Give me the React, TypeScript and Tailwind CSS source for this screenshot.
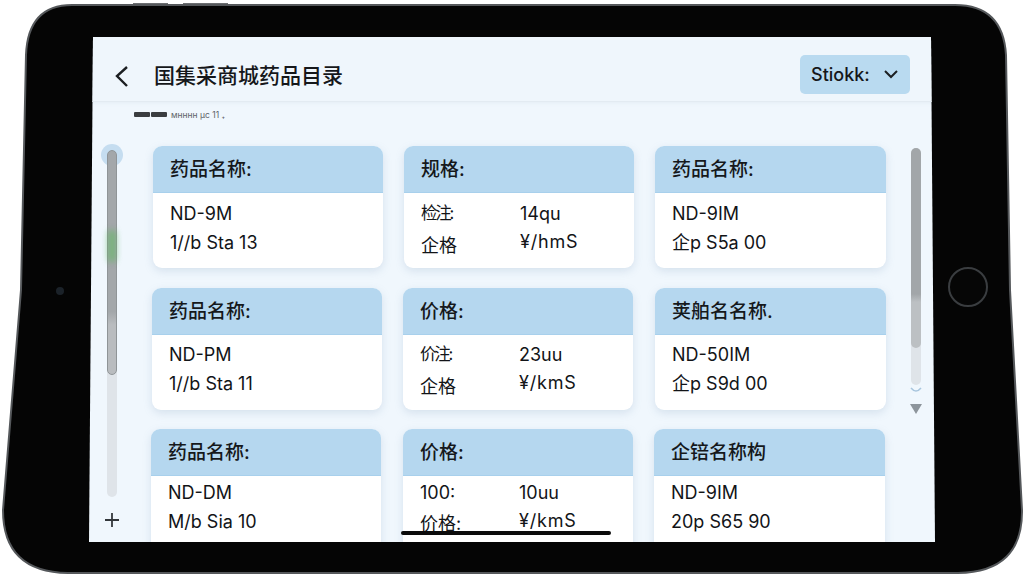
import React from "react";

type Line = { a: string; b?: string; labelClass?: string; valueClass?: string };
type CardData = { title: string; lines: Line[]; cls?: string };

const first = "text-[16.5px] tracking-[-2.2px]";
const second = "text-[18px] mt-[3px]";
const unit = "tracking-[0.8px] mt-[-1px]";

const rows: { cls: string; pt: string; cards: CardData[] }[] = [
  {
    cls: "ml-0",
    pt: "pt-[6px]",
    cards: [
      { title: "药品名称:", lines: [{ a: "ND-9M" }, { a: "1//b Sta 13" }] },
      {
        title: "规格:",
        cls: "ml-[21px]",
        lines: [
          { a: "检注:", b: "14qu", labelClass: first },
          { a: "企格", b: "¥/hmS", labelClass: second, valueClass: unit },
        ],
      },
      { title: "药品名称:", cls: "ml-[21px] w-[231px]", lines: [{ a: "ND-9IM" }, { a: "企p S5a 00" }] },
    ],
  },
  {
    cls: "ml-[-1px] mt-[20px]",
    pt: "pt-[5px]",
    cards: [
      { title: "药品名称:", lines: [{ a: "ND-PM" }, { a: "1//b Sta 11" }] },
      {
        title: "价格:",
        cls: "ml-[21px]",
        lines: [
          { a: "价注:", b: "23uu", labelClass: first },
          { a: "企格", b: "¥/kmS", labelClass: second, valueClass: unit },
        ],
      },
      { title: "荚舶名名称.", cls: "ml-[22px] w-[231px]", lines: [{ a: "ND-50IM" }, { a: "企p S9d 00" }] },
    ],
  },
  {
    cls: "ml-[-2px] mt-[19px]",
    pt: "pt-[2px]",
    cards: [
      { title: "药品名称:", lines: [{ a: "ND-DM" }, { a: "M/b Sia 10" }] },
      {
        title: "价格:",
        cls: "ml-[22px]",
        lines: [
          { a: "100:", b: "10uu" },
          { a: "价格:", b: "¥/kmS", labelClass: "text-[18px] mt-[2px]", valueClass: unit },
        ],
      },
      { title: "企锫名称构", cls: "ml-[21px] w-[231px]", lines: [{ a: "ND-9IM" }, { a: "20p S65 90" }] },
    ],
  },
];

function Card({ data, pt }: { data: CardData; pt: string }) {
  return (
    <div
      className={`w-[230px] h-[122px] shrink-0 rounded-[9px] bg-white overflow-hidden shadow-[0_3px_8px_rgba(120,150,180,0.22)] ${data.cls ?? ""}`}
    >
      <div className="h-[47px] bg-[#b5d7ef] border-b border-[#a8d0ec] pl-[17px] pt-[3px] flex items-center text-[19px] text-[#15181b] font-medium">
        {data.title}
      </div>
      <div className={`pl-[17px] ${pt} text-[18px] leading-[29px] text-[#121417]`}>
        {data.lines.map((l, i) =>
          l.b ? (
            <div key={i} className="flex">
              <span className={`w-[99px] shrink-0 ${l.labelClass ?? ""}`}>{l.a}</span>
              <span className={l.valueClass}>{l.b}</span>
            </div>
          ) : (
            <div key={i}>{l.a}</div>
          )
        )}
      </div>
    </div>
  );
}

function Device() {
  return (
    <svg className="absolute inset-0" width="1024" height="576" viewBox="0 0 1024 576">
      <rect x="133" y="3" width="35" height="4" fill="#6b6d70" />
      <rect x="183" y="3" width="45" height="4" fill="#6b6d70" />
      <path
        d="M72 5 H955 Q1003 5 1006 55 L1010 290 L1022 510 Q1023 572 958 573 H68 Q3 572 3 510 L21 290 L26 55 Q28 5 72 5 Z"
        fill="#050505"
        stroke="#55585b"
        strokeWidth="2"
      />
      <circle cx="968" cy="287" r="19" fill="#060606" stroke="#3a3d40" strokeWidth="2" />
      <circle cx="60" cy="291" r="4" fill="#1b2229" />
    </svg>
  );
}

export default function App() {
  return (
    <div
      className="relative w-[1024px] h-[576px] overflow-hidden bg-white pt-[37px] pl-[89px]"
      style={{ fontFamily: 'Inter, "Noto Sans CJK SC", sans-serif' }}
    >
      <Device />
      <div className="relative w-[846px] h-[505px] overflow-hidden bg-[#f0f7fd] [clip-path:polygon(4px_0,842px_0,846px_100%,0_100%)]">
        <header className="h-[65px] flex items-center justify-between pt-[10px] pl-[20px] pr-[25px] bg-[#eff6fc] border-b border-[#e3ebf2] shadow-[0_1px_4px_rgba(150,170,190,0.12)]">
          <div className="flex items-center mt-[3px]">
            <svg width="22" height="24" viewBox="0 0 22 24" fill="none" className="mr-[22px] ml-[1px]">
              <path d="M17 3 L7 12 L17 22" stroke="#1c1f22" strokeWidth="2.4" />
            </svg>
            <h1 className="text-[21px] font-medium text-[#15171a]">国集采商城药品目录</h1>
          </div>
          <div className="w-[110px] h-[39px] rounded-[5px] bg-[#b9daf0] flex items-center pl-[11px] text-[18px] text-[#15171a] font-medium">
            <span className="w-[73px]">Stiokk:</span>
            <svg width="14" height="10" viewBox="0 0 14 10" fill="none">
              <path d="M1 2 L7 8 L13 2" stroke="#1c1f22" strokeWidth="2" />
            </svg>
          </div>
        </header>

        <div className="h-[44px] pl-[45px] pt-[10px] flex items-start">
          <span className="w-[16px] h-[5px] mr-[1px] rounded-[1px] bg-[#3a3d40]" />
          <span className="w-[16px] h-[5px] mr-[4px] rounded-[1px] bg-[#3a3d40]" />
          <span className="text-[8.5px] leading-[6px] text-[#5d6368]">мнннн μc 11 ₊</span>
        </div>

        <div className="flex">
          <div className="w-[64px] shrink-0 pl-[18px] pt-[4px] flex flex-col">
            <div className="relative w-[10px] h-[347px] rounded-[5px] bg-[#dfe4e9]">
              <div className="absolute left-[-6px] top-[-6px] w-[22px] h-[22px] rounded-full bg-[#c5ddf0]" />
              <div className="relative w-[10px] h-[225px] rounded-[5px] border border-[#8f9497] bg-[linear-gradient(to_bottom,#a3a7aa_0%,#a3a7aa_72%,#b9bcbf_78%,#b9bcbf_100%)]" />
              <div className="absolute left-[1px] top-[80px] w-[8px] h-[32px] rounded-full bg-[#62b964] opacity-70 blur-[3px]" />
            </div>
            <svg width="14" height="14" viewBox="0 0 14 14" className="mt-[16px] ml-[-2px]">
              <path d="M7 0 V14 M0 7 H14" stroke="#33373b" strokeWidth="1.8" />
            </svg>
          </div>

          <div className="w-[733px] shrink-0">
            {rows.map((r, i) => (
              <div key={i} className={`flex ${r.cls}`}>
                {r.cards.map((c, j) => (
                  <Card key={j} data={c} pt={r.pt} />
                ))}
              </div>
            ))}
          </div>

          <div className="ml-[25px] pt-[2px] flex flex-col items-start">
            <div className="w-[10px] h-[237px] rounded-[5px] bg-[#dfe4e9]">
              <div className="w-[10px] h-[200px] rounded-[5px] bg-[linear-gradient(to_bottom,#a2a6a9_0%,#a2a6a9_73%,#bcc0c3_77%,#bcc0c3_100%)]" />
            </div>
            <svg width="12" height="28" viewBox="0 0 12 28" fill="none" className="ml-[-1px] mt-[1px]">
              <path d="M1 2 Q6 8 11 2" stroke="#a9c6de" strokeWidth="1.5" />
              <path d="M0 18 H12 L6 28 Z" fill="#8d959c" />
            </svg>
          </div>
        </div>

        <div className="absolute left-[312px] top-[494px] w-[210px] h-[4px] rounded-full bg-[#0b0b0b]" />
      </div>
    </div>
  );
}
